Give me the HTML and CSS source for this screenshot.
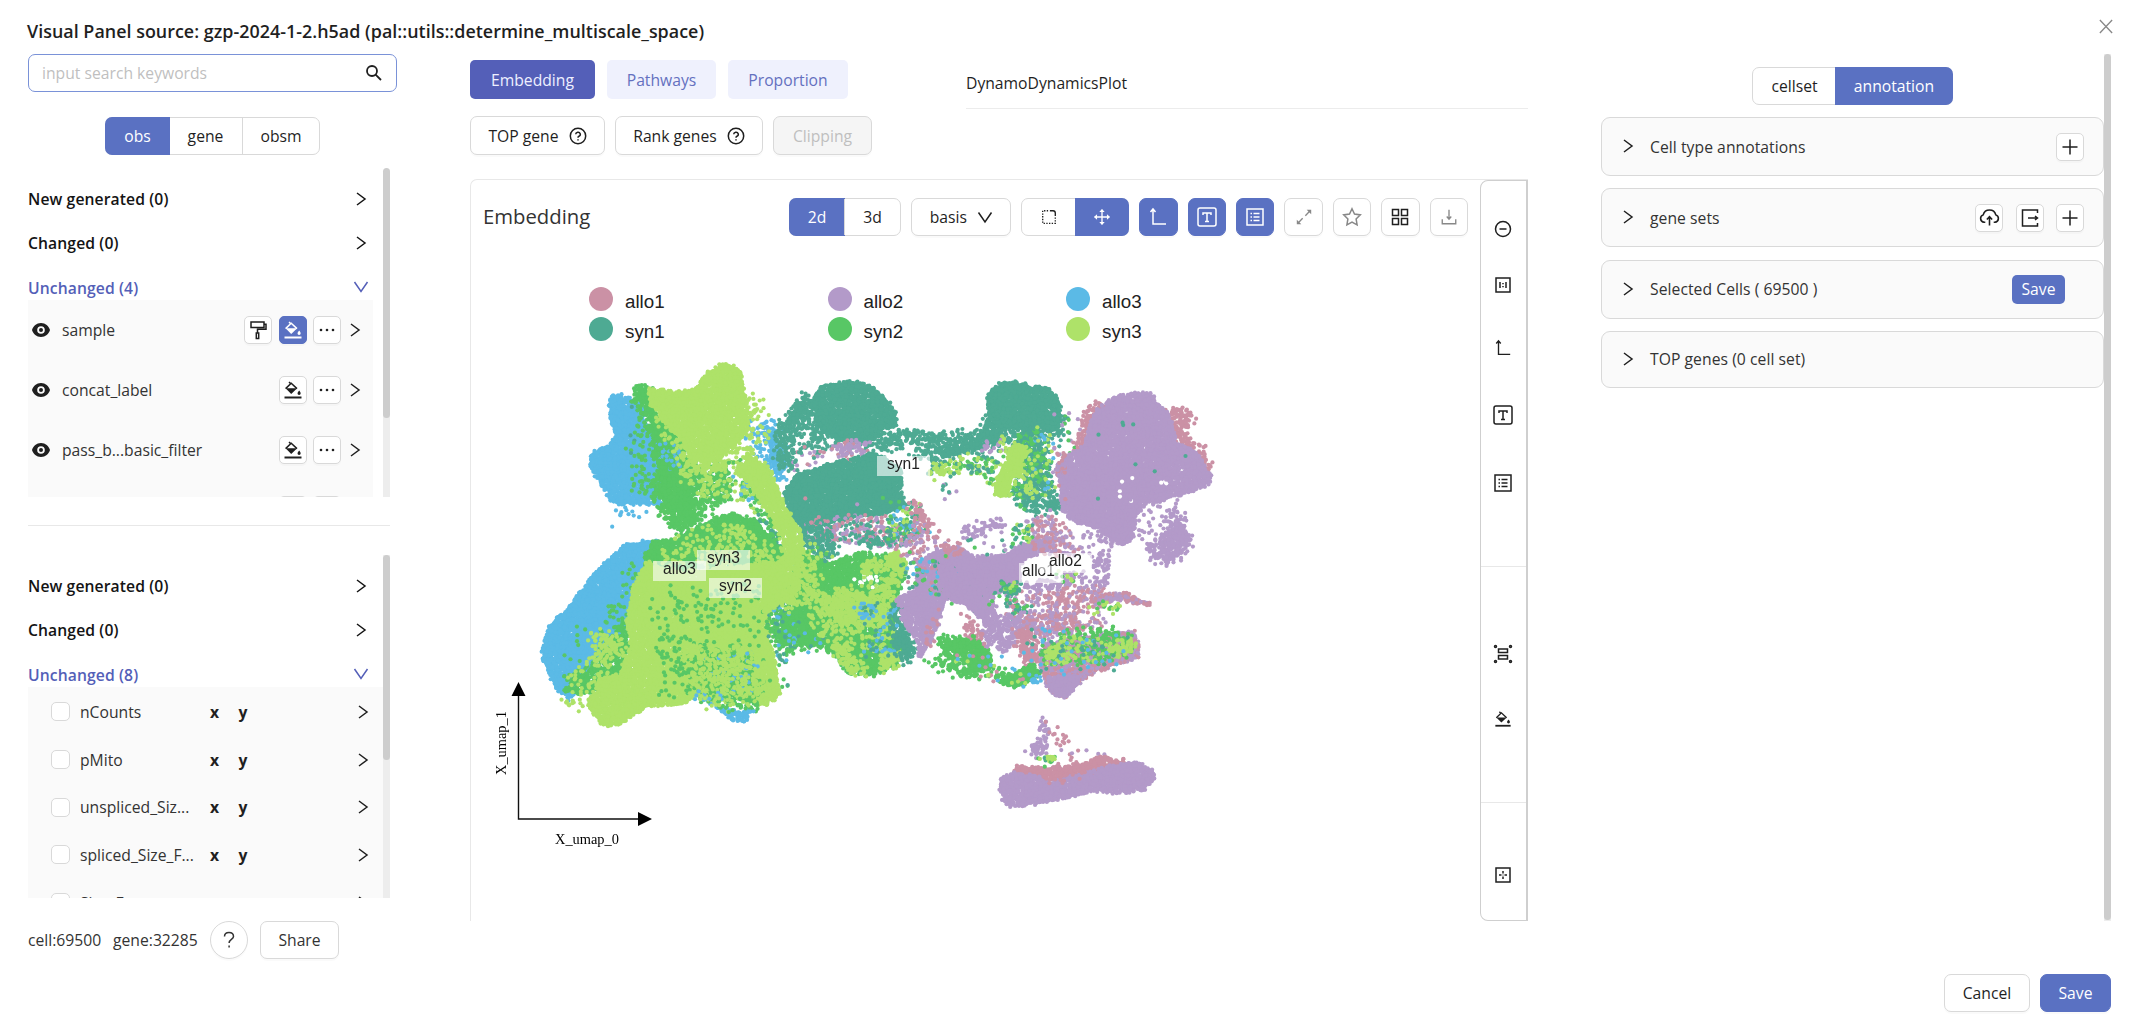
FILE: index.html
```html
<!DOCTYPE html>
<html lang="en">
<head>
<meta charset="utf-8">
<title>Visual Panel</title>
<link rel="stylesheet" href="styles.css">
</head>
<body>
<svg class="sprite" aria-hidden="true">
  <symbol id="chev" viewBox="0 0 12 16"><path d="M2 2l8 6-8 6"/></symbol>
  <symbol id="down" viewBox="0 0 16 12"><path d="M1.500 1l6.500 9.500L14.500 1"/></symbol>
  <symbol id="search" viewBox="0 0 18 18"><circle cx="7" cy="7" r="5"/><path d="M10.600 10.600l5.400 5.400"/></symbol>
  <symbol id="help" viewBox="0 0 18 18"><circle cx="9" cy="9" r="7.700"/><path d="M6.700 7.300a2.300 2.100 0 1 1 3.300 1.900c-.7.300-1 .8-1 1.500M9 12.200v1.300"/></symbol>
  <symbol id="qmark" viewBox="0 0 18 18"><path d="M4.500 5.500C4.500 3 6.500 1.500 9 1.500s4.500 1.500 4.500 4c0 3-4.400 3-4.400 6.500M9.100 14.500v2"/></symbol>
  <symbol id="eye" viewBox="0 0 20 16"><path class="solid" fill-rule="evenodd" d="M10 1C5.500 1 2.300 4 1 8c1.300 4 4.500 7 9 7s7.700-3 9-7c-1.300-4-4.500-7-9-7zm0 3.200a3.800 3.800 0 1 1 0 7.600 3.800 3.800 0 0 1 0-7.600z"/><circle class="solid" cx="10" cy="8" r="2"/></symbol>
  <symbol id="roller" viewBox="0 0 20 20"><path d="M3 2h13v5.500H3zM16 4.200h2v5H9.500V13M8.300 13h2.400v5.500H8.300z"/></symbol>
  <symbol id="bucket" viewBox="0 0 20 20"><path d="M6 2l1.800 1.800M2.600 8.600l5.600-5.400 5.800 5.400"/><path class="solid" d="M2.600 8.200h11.600l-6 5.800zM16.200 10.500c.8 1 1.500 2 1.500 2.800a1.600 1.600 0 0 1-3.200 0c0-.8.900-1.800 1.700-2.800z"/><path class="bar" d="M1.500 17.500h17"/></symbol>
  <symbol id="dots" viewBox="0 0 20 20"><circle class="solid" cx="4" cy="10" r="1.300"/><circle class="solid" cx="10" cy="10" r="1.300"/><circle class="solid" cx="16" cy="10" r="1.300"/></symbol>
  <symbol id="plus" viewBox="0 0 18 18"><path d="M9 1.500v15M1.500 9h15"/></symbol>
  <symbol id="cloud" viewBox="0 0 20 20"><path d="M6 14.500H4.800A3.600 3.600 0 0 1 4 7.500a6.200 6.200 0 0 1 12 0 3.600 3.600 0 0 1-.8 7H14M10 17.500V9.500M7.500 12l2.500-2.800 2.500 2.800"/></symbol>
  <symbol id="export" viewBox="0 0 20 20"><path d="M17.500 5V2h-15v16h15v-3M8 10h9M15 8l2.500 2-2.500 2"/></symbol>
  <symbol id="close" viewBox="0 0 16 16"><path d="M1 .5l14 15M15 .5l-14 15"/></symbol>
  <symbol id="lasso" viewBox="0 0 20 20"><path d="M11 3h3.500a2.500 2.500 0 0 1 2.500 2.500V9"/><path class="dash" d="M9 3H3v14h14v-8"/></symbol>
  <symbol id="move" viewBox="0 0 20 20"><path d="M10 2v16M2 10h16"/><path class="solid" d="M10 1l3 3.500H7zM10 19l3-3.500H7zM1 10l3.500-3v6zM19 10l-3.500-3v6z"/></symbol>
  <symbol id="axis" viewBox="0 0 20 20"><path d="M5 3v14h13M2.500 5L5 2l2.500 3"/></symbol>
  <symbol id="tbox" viewBox="0 0 20 20"><rect x="1" y="1" width="18" height="18" rx="2"/><path d="M6 8V6h8v2M10 6v8.500M8 14.500h4"/></symbol>
  <symbol id="list" viewBox="0 0 20 20"><rect x="2" y="2" width="16" height="16"/><path d="M8.500 6.500h6M8.500 10h6M8.500 13.500h6M5.500 6.500H7M5.500 10H7M5.500 13.500H7"/></symbol>
  <symbol id="expand" viewBox="0 0 20 20"><path d="M11.500 8.500L16 4M8.500 11.500L4 16"/><path class="solid" d="M18 2v5l-5-5zM2 18v-5l5 5z"/></symbol>
  <symbol id="star" viewBox="0 0 20 20"><path d="M10 1.800l2.500 5.300 5.800.8-4.200 4.100 1 5.800-5.100-2.700-5.100 2.700 1-5.800L1.700 7.900l5.800-.8z"/></symbol>
  <symbol id="grid" viewBox="0 0 20 20"><path d="M2.500 2.500h6v6h-6zM11.500 2.500h6v6h-6zM2.500 11.500h6v6h-6zM11.500 11.500h6v6h-6z"/></symbol>
  <symbol id="download" viewBox="0 0 20 20"><path d="M10 2v10M7.500 9.500L10 12.500l2.500-3M2.500 12.500v5h15v-5"/></symbol>
  <symbol id="minus" viewBox="0 0 18 18"><circle cx="9" cy="9" r="7.500"/><path d="M5.500 9h7"/></symbol>
  <symbol id="ratio" viewBox="0 0 18 18"><rect x="2" y="2" width="14" height="14"/><path d="M6 6v6M12 6v6M9 7v1.300M9 10v1.300"/></symbol>
  <symbol id="group" viewBox="0 0 20 20"><path d="M5.500 5h9v3.500h-9zM5.500 11.500h9V15h-9z"/><circle cx="2.500" cy="2.500" r="1"/><circle cx="17.500" cy="2.500" r="1"/><circle cx="2.500" cy="17.500" r="1"/><circle cx="17.500" cy="17.500" r="1"/></symbol>
  <symbol id="target" viewBox="0 0 18 18"><rect x="2" y="2" width="14" height="14"/><path d="M9 5v2.500M9 10.500V13M5 9h2.500M10.500 9H13M8.700 9h.6"/></symbol>
</svg>

<div class="app">
  <header class="titlebar">
    <h1>Visual Panel source: gzp-2024-1-2.h5ad (pal::utils::determine_multiscale_space)</h1>
    <svg class="ic close"><use href="#close"/></svg>
  </header>

  <div class="columns">
    <aside class="left">
      <div class="search"><span>input search keywords</span><svg class="ic i18"><use href="#search"/></svg></div>
      <div class="segment obs-seg"><span class="on">obs</span><span>gene</span><span>obsm</span></div>

      <div class="scroller first">
        <div class="scroll-body">
          <div class="head"><b>New generated (0)</b><svg class="ic chev"><use href="#chev"/></svg></div>
          <div class="head"><b>Changed (0)</b><svg class="ic chev"><use href="#chev"/></svg></div>
          <div class="head open"><b>Unchanged (4)</b><svg class="ic down"><use href="#down"/></svg></div>
          <div class="items obs-items">
            <div class="item"><svg class="ic eye"><use href="#eye"/></svg><span class="name">sample</span><i class="sq"><svg class="ic i20"><use href="#roller"/></svg></i><i class="sq on"><svg class="ic i20"><use href="#bucket"/></svg></i><i class="sq"><svg class="ic i20"><use href="#dots"/></svg></i><svg class="ic chev"><use href="#chev"/></svg></div>
            <div class="item"><svg class="ic eye"><use href="#eye"/></svg><span class="name">concat_label</span><i class="sq"><svg class="ic i20"><use href="#bucket"/></svg></i><i class="sq"><svg class="ic i20"><use href="#dots"/></svg></i><svg class="ic chev"><use href="#chev"/></svg></div>
            <div class="item"><svg class="ic eye"><use href="#eye"/></svg><span class="name">pass_b...basic_filter</span><i class="sq"><svg class="ic i20"><use href="#bucket"/></svg></i><i class="sq"><svg class="ic i20"><use href="#dots"/></svg></i><svg class="ic chev"><use href="#chev"/></svg></div>
            <div class="item"><span class="name"></span><i class="sq"></i><i class="sq"></i><svg class="ic chev"></svg></div>
          </div>
        </div>
        <div class="track"><div class="thumb"></div></div>
      </div>

      <div class="scroller second">
        <div class="scroll-body">
          <div class="head"><b>New generated (0)</b><svg class="ic chev"><use href="#chev"/></svg></div>
          <div class="head"><b>Changed (0)</b><svg class="ic chev"><use href="#chev"/></svg></div>
          <div class="head open"><b>Unchanged (8)</b><svg class="ic down"><use href="#down"/></svg></div>
          <div class="items num-items">
            <div class="item"><i class="check"></i><span class="name">nCounts</span><b>x</b><b>y</b><svg class="ic chev"><use href="#chev"/></svg></div>
            <div class="item"><i class="check"></i><span class="name">pMito</span><b>x</b><b>y</b><svg class="ic chev"><use href="#chev"/></svg></div>
            <div class="item"><i class="check"></i><span class="name">unspliced_Siz...</span><b>x</b><b>y</b><svg class="ic chev"><use href="#chev"/></svg></div>
            <div class="item"><i class="check"></i><span class="name">spliced_Size_F...</span><b>x</b><b>y</b><svg class="ic chev"><use href="#chev"/></svg></div>
            <div class="item"><i class="check"></i><span class="name">Size_Factor</span><b></b><b></b><svg class="ic chev"><use href="#chev"/></svg></div>
          </div>
        </div>
        <div class="track"><div class="thumb"></div></div>
      </div>

      <div class="stats"><span class="cells">cell:69500</span><span class="genes">gene:32285</span><span class="btn round"><svg class="ic i18"><use href="#qmark"/></svg></span><span class="btn share">Share</span></div>
    </aside>

    <main class="center">
      <div class="top-tabs">
        <div class="tabs"><span class="tab on">Embedding</span><span class="tab path">Pathways</span><span class="tab prop">Proportion</span></div>
        <div class="plugin">DynamoDynamicsPlot</div>
      </div>
      <div class="actions">
        <span class="btn topgene">TOP gene<svg class="ic i18"><use href="#help"/></svg></span>
        <span class="btn rank">Rank genes<svg class="ic i18"><use href="#help"/></svg></span>
        <span class="btn clip">Clipping</span>
      </div>
      <section class="panel">
        <div class="view">
          <div class="toolbar">
            <h2>Embedding</h2>
            <div class="segment dims"><span class="on">2d</span><span>3d</span></div>
            <span class="btn basis">basis<svg class="ic down"><use href="#down"/></svg></span>
            <div class="segment mode"><span><svg class="ic i18"><use href="#lasso"/></svg></span><span class="on"><svg class="ic i18"><use href="#move"/></svg></span></div>
            <span class="btn tool on"><svg class="ic i20"><use href="#axis"/></svg></span>
            <span class="btn tool on"><svg class="ic i20"><use href="#tbox"/></svg></span>
            <span class="btn tool on"><svg class="ic i20"><use href="#list"/></svg></span>
            <span class="btn tool dim"><svg class="ic i18"><use href="#expand"/></svg></span>
            <span class="btn tool dim"><svg class="ic i20"><use href="#star"/></svg></span>
            <span class="btn tool"><svg class="ic i20"><use href="#grid"/></svg></span>
            <span class="btn tool dim"><svg class="ic i18"><use href="#download"/></svg></span>
          </div>
          <div class="legend">
            <span><i class="c-allo1"></i>allo1</span><span><i class="c-allo2"></i>allo2</span><span><i class="c-allo3"></i>allo3</span>
            <span><i class="c-syn1"></i>syn1</span><span><i class="c-syn2"></i>syn2</span><span><i class="c-syn3"></i>syn3</span>
          </div>
          <div class="plot">
            <canvas id="cells" width="1000" height="575"></canvas>
            <svg class="axes" width="240" height="240"><path d="M47.500 26v123h122" /><path class="head" d="M47.500 12l7 14h-14zM181 149l-14-7v14z"/><text x="84" y="174">X_umap_0</text><text transform="translate(35 105) rotate(-90)">X_umap_1</text></svg>
            <span class="tag t-syn1">syn1</span>
            <span class="tag t-allo3">allo3</span>
            <span class="tag t-syn3">syn3</span>
            <span class="tag t-syn2">syn2</span>
            <span class="tag t-allo1">allo1</span>
            <span class="tag t-allo2">allo2</span>
          </div>
        </div>
        <nav class="side">
          <div class="g1"><svg class="ic i18"><use href="#minus"/></svg><svg class="ic i18"><use href="#ratio"/></svg><svg class="ic i18"><use href="#axis"/></svg><svg class="ic i20"><use href="#tbox"/></svg><svg class="ic i20"><use href="#list"/></svg></div>
          <div class="g2"><svg class="ic i20"><use href="#group"/></svg><svg class="ic i18"><use href="#bucket"/></svg></div>
          <div class="g3"><svg class="ic i18"><use href="#target"/></svg></div>
        </nav>
      </section>
    </main>

    <aside class="right">
      <div class="right-body">
        <div class="segment anno-seg"><span>cellset</span><span class="on">annotation</span></div>
        <div class="card"><svg class="ic chev"><use href="#chev"/></svg><span class="name">Cell type annotations</span><i class="sq"><svg class="ic i18"><use href="#plus"/></svg></i></div>
        <div class="card"><svg class="ic chev"><use href="#chev"/></svg><span class="name">gene sets</span><i class="sq"><svg class="ic i22"><use href="#cloud"/></svg></i><i class="sq"><svg class="ic i20"><use href="#export"/></svg></i><i class="sq"><svg class="ic i18"><use href="#plus"/></svg></i></div>
        <div class="card"><svg class="ic chev"><use href="#chev"/></svg><span class="name">Selected Cells ( 69500 )</span><span class="mini">Save</span></div>
        <div class="card"><svg class="ic chev"><use href="#chev"/></svg><span class="name">TOP genes (0 cell set)</span></div>
      </div>
      <div class="track"><div class="thumb"></div></div>
    </aside>
  </div>

  <footer><span class="btn cancel">Cancel</span><span class="btn save">Save</span></footer>
</div>
<script src="plot.js"></script>
</body>
</html>
```
FILE: styles.css
```css
* { box-sizing: border-box; }
body { margin: 0; background: #fff; color: #1f1f1f; font: 15.7px/24px "Open Sans", "Noto Sans", sans-serif; overflow: hidden; }
h1, h2 { margin: 0; }
i { font-style: normal; }
b { font-weight: 600; }
.sprite { display: none; }

.ic { flex: none; fill: none; stroke: currentColor; stroke-width: 1.5; display: block; }
.i18 { width: 18px; height: 18px; }
.i20 { width: 20px; height: 20px; }
.i22 { width: 21px; height: 21px; }
.chev { width: 12px; height: 16px; }
.down { width: 16px; height: 12px; }
.eye { width: 20px; height: 16px; }
.solid { fill: currentColor; stroke: none; }
.bar { stroke-width: 2; }
.dash { stroke-dasharray: 1.5 1.5; }

.app { height: 1033px; display: flex; flex-direction: column; padding: 0 20px 21px 28px; }
.titlebar { height: 54px; flex: none; display: flex; justify-content: space-between; padding: 18px 0 0; }
h1 { font-size: 17.900px; font-weight: 600; line-height: 26px; letter-spacing: .02px; margin-left: -1px; }
.close { width: 14px; height: 15px; color: #888; margin: 1px -2px 0 0; }
.columns { display: flex; height: 867px; flex: none; }

.left { width: 369px; display: flex; flex-direction: column; margin-right: 73px; height: 906px; flex: none; }
.search { height: 38px; flex: none; border: 1px solid #7a92d8; border-radius: 7px; padding: 0 13px; display: flex; align-items: center; justify-content: space-between; color: #bfbfbf; }
.search .ic { color: #1f1f1f; stroke-width: 1.800; }

.segment { display: flex; height: 38px; flex: none; border: 1px solid #d9d9d9; border-radius: 7px; }
.segment span { display: flex; align-items: center; justify-content: center; flex: 1; }
.segment span + span { border-left: 1px solid #d9d9d9; }
.segment .on { background: #5a71c2; color: #fff; border: 0 !important; margin: -1px; }
.segment .on:first-child { border-radius: 7px 0 0 7px; }
.segment .on:last-child { border-radius: 0 7px 7px 0; }
.obs-seg { width: 215px; margin: 25px 0 13px 77px; }
.obs-seg span:nth-child(1) { flex: 0 0 65px; }
.obs-seg span:nth-child(2) { flex: 0 0 73px; border-left: 0; }

.scroller { display: flex; width: 362px; flex: none; overflow: hidden; position: relative; }
.scroll-body { width: 355px; display: flex; flex-direction: column; }
.track { width: 7px; background: #ededed; }
.thumb { background: #cdcdcd; border-radius: 4px; }
.first { height: 329px; }
.first .track { background: linear-gradient(#fff 0 4px, #ededed 4px); }
.first .thumb { height: 250px; }
.second { height: 343px; margin-top: 58px; overflow: visible; }
.second .scroll-body { overflow: hidden; }
.second::before { content: ""; position: absolute; top: -30px; left: 0; width: 362px; height: 1px; background: #e8e8e8; }
.second .thumb { height: 205px; }
.head { height: 44px; display: flex; align-items: center; justify-content: space-between; padding-right: 16px; flex: none; color: #141414; }
.head b { letter-spacing: .1px; }
.first .head:first-child { margin-top: 9px; }
.second .head:first-child { margin-top: 9px; }
.head.open { color: #545fb8; height: 35px; padding: 11px 14px 0 0; align-items: flex-start; }
.head.open .ic { margin-top: 5px; }
.items { background: #fafafa; flex: none; }
.item { display: flex; align-items: center; color: #333; }
.item .ic { color: #1f1f1f; }
.obs-items { width: 345px; }
.obs-items .item { height: 60px; padding: 0 12px 0 3px; }
.obs-items .eye { margin-right: 11px; }
.obs-items .chev { margin-left: 8px; }
.name { flex: 1; white-space: nowrap; }
.sq { width: 28px; height: 28px; flex: none; border: 1px solid #d9d9d9; border-radius: 5px; background: #fff; display: flex; align-items: center; justify-content: center; margin-left: 6.500px; box-shadow: 0 2px 0 rgba(0,0,0,.02); }
.item .sq.on, .item .sq.on .ic { background: #5a71c2; border-color: #5a71c2; color: #fff; }
.num-items .item { height: 47.700px; padding: 2px 14px 0 23px; }
.check { width: 19px; height: 19px; background: #fff; border: 1px solid #d9d9d9; border-radius: 5px; margin-right: 10px; flex: none; }
.num-items .name { flex: 0 0 130px; }
.num-items b { width: 28.500px; color: #1f1f1f; font-weight: 700; }
.num-items .chev { margin-left: auto; }

.stats { display: flex; align-items: center; margin-top: 23px; color: #333; }
.cells { width: 85px; }
.genes { width: 97px; }
.btn { height: 38px; flex: none; display: flex; align-items: center; justify-content: center; border: 1px solid #d9d9d9; border-radius: 7px; background: #fff; box-shadow: 0 2px 0 rgba(0,0,0,.02); }
.round { width: 38px; border-radius: 50%; margin-right: 12px; }
.share { width: 79px; }

.center { width: 1058px; flex: none; display: flex; flex-direction: column; margin-right: 73px; }
.top-tabs { display: flex; justify-content: space-between; height: 55px; flex: none; }
.tabs { display: flex; gap: 12px; padding-top: 6px; }
.tab { height: 39px; width: 125px; display: flex; align-items: center; justify-content: center; border-radius: 5px; background: #eff1fd; color: #6470bf; }
.tab.on { background: #545fb8; color: #eef0ff; }
.path { width: 109px; }
.prop { width: 120px; }
.plugin { width: 562px; border-bottom: 1px solid #ececec; padding-top: 17px; }
.actions { display: flex; gap: 10px; padding-top: 7px; height: 70px; flex: none; }
.actions .btn { gap: 10px; height: 39px; }
.topgene { width: 135px; }
.rank { width: 148px; }
.clip { width: 99px; background: #f5f5f5; color: #bfbfbf; }
.panel { display: flex; height: 742px; flex: none; border: 1px solid #e8e8e8; border-width: 1px 0 0 1px; border-radius: 7px 0 0 0; }
.view { flex: 1; }
.toolbar { display: flex; gap: 10px; padding: 18px 12px 0 12px; align-items: center; }
h2 { font-size: 20.300px; font-weight: 400; margin: -2px auto 0 0; color: #333; }
.dims { width: 112px; }
.basis { width: 100px; gap: 10px; }
.basis .down { height: 13px; }
.mode { width: 108px; }
.tool { width: 38.400px; border-color: #d9d9d9; }
.tool.on { background: #5a71c2; border-color: #5a71c2; color: #fff; }
.dim { color: #888; }
.legend { display: grid; grid-template-columns: repeat(3, 238.500px); grid-auto-rows: 30px; margin: 49px 0 0 118px; font: 18.800px "Liberation Sans", Arial, sans-serif; color: #222; width: 800px; }
.legend span { display: flex; align-items: center; padding-top: 4px; }
.legend i { width: 24px; height: 24px; border-radius: 50%; margin: -6px 12px 0 0; }
.c-allo1 { background: #cb91a5; } .c-allo2 { background: #b39ac9; } .c-allo3 { background: #5bbae6; }
.c-syn1 { background: #4eaa93; } .c-syn2 { background: #58c765; } .c-syn3 { background: #aee269; }
.plot { position: relative; height: 575px; }
#cells { position: absolute; left: 0; top: 0; }
.axes { position: absolute; left: 0; top: 325px; fill: none; stroke: #111; stroke-width: 1.400; }
.axes .head, .axes text { fill: #000; stroke: none; }
.axes text { font: 14.400px "Liberation Serif", "Times New Roman", serif; }
.tag { position: absolute; width: 53px; height: 20px; background: rgba(255,255,255,.6); text-align: center; font: 15.600px/16px "Liberation Sans", Arial, sans-serif; color: #222; }
.t-syn1 { left: 406px; top: 111px; }
.t-allo3 { left: 182px; top: 216px; }
.t-syn3 { left: 226px; top: 205px; }
.t-syn2 { left: 238px; top: 233px; }
.t-allo1 { left: 548px; top: 218px; width: 44px; padding-left: 3px; text-align: left; }
.t-allo2 { left: 568px; top: 208px; }
.side { width: 48px; border: 1px solid #cfcfcf; border-radius: 8px 0 0 8px; border-right-width: 2px; display: flex; flex-direction: column; }
.side div { display: flex; flex-direction: column; align-items: center; padding-right: 1px; }
.side div + div { border-top: 1px solid #e8e8e8; }
.g1 { height: 385px; padding-top: 39px; }
.g1 .ic:nth-child(2) { margin-top: 38px; }
.g1 .ic:nth-child(3) { margin-top: 45px; }
.g1 .ic:nth-child(4) { margin-top: 48px; }
.g1 .ic:nth-child(5) { margin-top: 48px; }
.g2 { height: 236px; padding-top: 77px; }
.g2 .ic + .ic { margin-top: 46px; }
.g3 { padding-top: 63px; }

.right { display: flex; width: 510px; flex: none; }
.right-body { width: 503px; padding-top: 13px; }
.anno-seg { width: 201px; margin: 0 0 12px 151px; }
.anno-seg span:first-child { flex: 0 0 83px; }
.card { height: 59px; border: 1px solid #d9d9d9; border-radius: 9px; background: #fafafa; display: flex; align-items: center; margin-bottom: 12.300px; padding: 0 19px 0 20px; color: #333; letter-spacing: .05px; }
.card:last-child { height: 57px; }
.card .chev { color: #1f1f1f; margin: -1px 16px 0 0; }
.card .sq { margin-left: 12.500px; color: #1f1f1f; }
.mini { width: 53px; height: 29px; border-radius: 5px; background: #5a71c2; color: #fff; text-align: center; line-height: 29px; margin-right: 19px; }
.right .track { height: 867px; }
.right .thumb { height: 866px; }

footer { margin-top: auto; display: flex; justify-content: flex-end; gap: 10px; }
.cancel { width: 86px; }
.save { width: 71px; background: #5a71c2; border-color: #5a71c2; color: #fff; }
```
FILE: plot.js
```js
// Scatter of cells: each cluster is [colours, points per px², outline].
// Outlines are in thirds of a pixel; every block has its own origin.
const COLORS = { B: '#5bbae6', G: '#58c765', L: '#aee269', T: '#4eaa93', P: '#b39ac9', K: '#cb91a5', W: '#fff' };
const canvas = document.getElementById('cells');
const ctx = canvas.getContext('2d');

let seed = 20241;
function rand() {
  seed = (seed + 0x6d2b79f5) | 0;
  let t = Math.imul(seed ^ (seed >>> 15), 1 | seed);
  t = (t + Math.imul(t ^ (t >>> 7), 61 | t)) ^ t;
  return ((t ^ (t >>> 14)) >>> 0) / 4294967296;
}

function inside(p, x, y) {
  let hit = false;
  for (let i = 0, j = p.length - 1; i < p.length; j = i++) {
    const [xi, yi] = p[i], [xj, yj] = p[j];
    if ((yi > y) !== (yj > y) && x < (xj - xi) * (y - yi) / (yj - yi) + xi) hit = !hit;
  }
  return hit;
}

function cluster(ox, oy, colors, density, outline) {
  const p = outline.split(' ').map(s => s.split(',').map(Number)).map(([x, y]) => [ox + x / 3, oy + y / 3]);
  const xs = p.map(q => q[0]), ys = p.map(q => q[1]);
  const x0 = Math.min(...xs), x1 = Math.max(...xs), y0 = Math.min(...ys), y1 = Math.max(...ys);
  const n = (x1 - x0) * (y1 - y0) * density;
  // Thin clusters have soft edges, dense ones only a slight roughness.
  const spread = density > .3 ? 2 : 7;
  for (let i = 0; i < n; i++) {
    let x = x0 + rand() * (x1 - x0), y = y0 + rand() * (y1 - y0);
    if (!inside(p, x, y)) continue;
    x += (rand() + rand() - 1) * spread;
    y += (rand() + rand() - 1) * spread;
    ctx.fillStyle = COLORS[colors[Math.floor(rand() * colors.length)]];
    ctx.beginPath();
    ctx.arc(x, y, 2.1, 0, 7);
    ctx.fill();
  }
}

const west = [
  ['B', .45, '450,168 490,165 540,190 560,260 600,330 600,495 530,490 460,492 430,440 390,385 392,340 440,322 468,290 447,220'],
  ['B', .03, '460,490 560,495 550,530 465,552'],
  ['G', .012, '460,320 560,330 560,450 500,450'],
  ['T', .002, '460,190 560,190 560,400 460,400'],
  ['B', .06, '860,240 945,230 975,330 970,460 940,430 880,340 850,300'],
  ['B', .12, '905,260 945,260 965,350 970,420 930,410'],
  ['G', .25, '537,135 575,160 590,220 650,270 670,340 700,370 700,480 690,550 665,580 610,530 605,490 575,480 590,400 580,320 560,240 510,170'],
  ['G', .32, '537,138 565,160 590,240 650,290 660,340 690,370 690,480 680,530 620,500 600,420 600,320'],
  ['G', .17, '690,360 800,380 815,470 760,500 730,480 720,540 660,560'],
  ['GB', .1, '600,310 670,330 660,400 590,370'],
  ['G', .03, '510,200 560,230 580,470 510,450 540,330'],
  ['L', .5, '562,145 600,150 650,157 705,150 745,97 785,72 820,78 843,100 852,160 862,200 858,285 800,330 790,350 690,360 665,300 610,240 570,190'],
  ['L', .2, '690,350 800,350 800,380 740,400 700,380'],
  ['L', .05, '860,140 915,180 920,330 860,300'],
  ['L', .06, '570,200 640,230 690,340 820,360 810,470 720,480 660,400 610,290'],
  ['LG', .06, '800,340 870,380 900,480 960,560 840,480'],
  ['LGB', .04, '810,400 870,400 900,540 850,490'],
  ['GT', .05, '880,490 950,520 970,620 880,560'],
  ['G', .06, '700,480 800,480 730,540 670,575'],
  ['TG', .14, '920,540 960,550 965,630 930,600'],
  ['B', .5, '500,614 560,605 600,607 565,680 520,770 510,860 430,930 380,990 330,1080 290,1045 250,960 248,920 268,860 330,795 405,700 460,645'],
  ['G', .5, '580,604 650,597 700,577 760,537 820,520 880,540 940,600 980,660 900,710 560,700 555,650'],
  ['G', .03, '500,680 540,690 500,860 410,900'],
  ['G', .005, '300,900 440,780 400,950 300,1000'],
  ['G', .25, '490,850 520,880 500,1000 380,1070 315,1050 320,1015 380,990 430,920'],
  ['L', .12, '400,880 460,880 480,920 410,970 385,940'],
  ['L', .04, '470,900 510,900 510,1020 320,1060 320,1020'],
  ['L', .5, '560,665 640,700 740,690 960,665 1010,740 930,820 925,900 945,960 960,1060 915,1100 860,1085 800,1060 700,1075 660,1092 560,1098 480,1153 430,1156 395,1115 384,1080 420,1020 480,1005 515,920 500,850 520,740'],
  ['L', .05, '310,1080 400,1085 400,1110 330,1105'],
  ['L', .05, '600,620 960,620 960,700 580,690'],
  ['L', .12, '790,550 840,560 860,590 790,590'],
  ['L', .03, '640,590 760,560 930,600 930,640 640,640'],
  ['G', .018, '560,750 920,720 900,900 940,1080 600,1060'],
  ['G', .09, '640,970 740,930 860,950 880,1060 900,1110 720,1080'],
  ['GB', .04, '740,940 880,940 880,1060 760,1040'],
  ['L', .09, '660,920 900,930 920,1080 700,1060'],
  ['B', .4, '765,1098 830,1112 890,1110 850,1148 810,1138'],
  ['BGL', .12, '690,1060 780,1060 880,1100 820,1110 730,1092'],
  ['GT', .05, '920,820 990,780 980,1040 960,1060 960,960'],
];
const north = [
  ['T', .45, '65,108 110,97 165,95 215,112 250,142 286,185 290,225 240,240 200,280 120,270 60,240 45,200 42,140'],
  ['T', .25, '-20,170 20,137 50,142 60,250 30,200 0,210 -25,250 -20,340 -30,370 -66,335 -70,240 -35,200'],
  ['T', .1, '-20,200 60,200 260,240 310,240 300,300 200,290 -10,300'],
  ['T', .13, '290,237 420,252 560,240 570,200 620,250 540,290 400,335 350,300 400,275 320,265'],
  ['T', .3, '560,235 620,250 540,290 420,325 440,295 520,270'],
  ['T', .05, '240,230 540,260 420,330 240,300'],
  ['PK', .04, '60,290 120,275 210,280 230,305 130,335 50,310'],
  ['P', .15, '105,285 170,275 200,300 130,325'],
  ['PKT', .03, '-40,300 60,290 60,330 -30,400'],
  ['T', .5, '-50,430 -10,375 80,344 170,324 215,308 255,325 303,360 306,440 318,470 250,490 60,520 10,540 -30,500'],
  ['TPK', .002, '0,420 200,420 200,500 0,500'],
  ['G', .01, '240,440 300,440 300,500 240,480'],
  ['T', .45, '600,99 650,97 700,110 750,114 780,152 783,210 760,240 600,235 570,210 559,140'],
  ['T', .13, '560,200 780,210 800,270 760,260 640,280 520,300'],
  ['T', .18, '680,270 740,290 750,400 780,475 680,485 640,430 690,380'],
  ['TG', .12, '640,230 740,250 740,400 650,480 640,430'],
  ['TBPGL', .035, '700,220 750,240 770,450 730,450'],
  ['TPG', .02, '780,170 850,180 850,330 760,320'],
  ['GTL', .12, '440,335 620,320 580,395 500,360 420,375 370,370'],
  ['L', .15, '370,370 440,345 450,370 400,380'],
  ['P', .08, '530,290 620,275 620,300 560,310'],
  ['L', .5, '640,285 680,292 660,372 635,380 620,437 584,432 594,385 616,340'],
  ['L', .05, '600,250 700,300 700,440 620,430'],
  ['K', .28, '870,175 905,155 915,170 880,250 860,290 820,310 840,270'],
  ['K', .2, '1105,178 1165,178 1178,215 1150,250 1195,285 1225,340 1228,380 1195,350 1140,290 1115,240'],
  ['P', .5, '890,180 940,142 1000,128 1055,130 1078,165 1110,200 1130,280 1190,305 1213,345 1235,382 1220,410 1150,432 1080,453 1040,458 1013,490 1000,560 965,588 890,533 820,513 785,480 780,400 770,350 800,320 850,290 870,225'],
  ['W', .01, '910,390 1110,390 1090,430 950,450'],
  ['P', .02, '900,380 1120,380 1100,440 940,460'],
  ['PK', .07, '765,310 800,310 800,440 770,410'],
  ['T', .0008, '850,200 1180,210 1180,420 860,500'],
  ['P', .04, '1010,470 1090,450 1080,500 1020,560'],
  ['P', .05, '850,540 1000,560 960,600 860,590'],
  ['P', .12, '1095,480 1140,460 1150,500 1175,580 1125,630 1108,685 1090,640 1035,610 1070,560 1100,550'],
  ['P', .25, '1100,510 1145,510 1165,580 1120,630 1070,610 1085,570'],
  ['P', .03, '1020,480 1040,600 1100,670 1010,600'],
];
const middle = [
  ['TPK', .13, '220,250 320,235 500,235 560,280 560,310 500,320 340,300 230,300'],
  ['T', .2, '220,250 280,260 320,330 280,360 220,310'],
  ['T', .1, '370,290 490,280 490,320 400,310'],
  ['G', .38, '215,330 300,370 400,335 480,345 520,360 525,400 500,470 490,560 520,600 500,680 430,705 350,700 315,645 260,615 150,610 150,580 200,480 170,440'],
  ['G', .13, '110,550 200,470 260,500 250,620 150,625'],
  ['GTB', .04, '110,540 160,500 300,620 150,660'],
  ['L', .35, '60,40 120,90 160,190 215,280 215,350 190,480 100,520 100,420 170,340 130,240 60,140 20,80'],
  ['L', .1, '0,20 60,20 120,100 80,160 20,100'],
  ['L', .1, '180,300 240,330 280,400 260,490 170,510'],
  ['TGL', .08, '230,310 310,320 300,360 240,350'],
  ['W', .2, '380,412 440,408 435,430 390,425'],
  ['L', .35, '465,345 500,335 540,385 515,400 480,375'],
  ['L', .25, '400,375 480,360 490,380 400,400'],
  ['L', .25, '400,440 460,420 510,395 500,430 440,450'],
  ['L', .22, '270,480 340,450 460,480 480,540 420,560 360,550 300,540'],
  ['L', .06, '230,450 500,450 480,620 320,640 240,560'],
  ['L', .28, '305,600 350,630 420,700 350,695'],
  ['L', .28, '450,640 500,620 500,680 450,685'],
  ['BT', .09, '385,490 440,490 440,540 390,540'],
  ['T', .25, '490,500 520,500 530,580 560,610 550,658 510,655 490,590'],
  ['TB', .05, '440,580 490,470 500,650 400,650'],
  ['GTBL', .12, '470,240 560,190 590,270 520,300 480,280'],
  ['K', .14, '530,190 580,200 610,270 560,260'],
  ['PK', .06, '580,230 620,270 660,310 540,380 500,320'],
  ['P', .4, '560,370 620,330 690,320 730,350 850,345 890,310 850,450 790,460 800,540 740,520 690,480 650,475 610,590 570,655 560,600 520,550 500,480 560,440'],
  ['K', .04, '570,600 640,490 650,500 600,620'],
  ['K', .12, '640,310 690,310 690,350 640,350'],
  ['GTBK', .03, '510,350 690,350 740,480 540,450'],
  ['TG', .012, '600,450 900,400 900,540 740,520'],
  ['PT', .025, '620,120 690,100 680,170 640,190'],
  ['G', .3, '630,600 740,610 780,640 780,680 740,670 660,640'],
  ['G', .14, '580,670 650,660 780,690 780,710 690,700'],
];
const south = [
  ['P', .14, '60,300 180,270 185,295 90,340'],
  ['GTP', .025, '60,310 220,340 360,350 120,370'],
  ['P', .4, '0,385 180,385 250,340 310,330 330,360 240,390 240,460 150,490 120,530 160,600 100,540 0,490'],
  ['PK', .12, '270,270 340,250 400,350 440,380 280,370'],
  ['GLT', .13, '220,290 270,280 290,330 230,330'],
  ['P', .25, '465,375 500,370 510,410 460,420'],
  ['P', .18, '250,470 420,430 430,455 300,485'],
  ['K', .07, '380,470 500,480 490,520 380,540 240,500'],
  ['PK', .05, '200,490 480,460 500,600 280,620 200,560'],
  ['P', .15, '450,460 500,440 510,460 470,475'],
  ['PK', .35, '460,500 550,487 632,520 622,528 550,515 480,520'],
  ['T', .3, '168,470 240,468 240,482 180,485'],
  ['LG', .1, '170,465 240,465 240,480 180,480'],
  ['LG', .15, '360,435 410,435 410,450 370,450'],
  ['TG', .08, '200,510 270,530 270,560 210,560'],
  ['GL', .16, '460,530 540,515 530,535 470,545'],
  ['P', .22, '140,570 240,560 290,580 200,660 120,640'],
  ['K', .2, '70,550 110,590 130,650 90,650'],
  ['K', .3, '225,590 270,590 300,690 270,710 240,660'],
  ['PK', .15, '250,560 400,540 440,600 300,630'],
  ['PK', .33, '310,640 440,620 580,603 600,650 590,685 510,710 440,740 400,775 380,800 345,795 320,770 300,700'],
  ['P', .45, '325,740 420,740 405,775 375,802 345,795 325,765'],
  ['G', .1, '320,640 430,590 520,600 590,640 560,680 430,700 310,700'],
  ['L', .25, '305,690 350,650 370,660 330,695'],
  ['L', .25, '510,660 580,630 585,650 520,680'],
  ['L', .05, '350,620 580,630 500,690 330,690'],
  ['G', .28, '0,630 110,630 150,690 140,710 100,700 30,680'],
  ['G', .1, '0,700 180,710 190,740 80,735'],
  ['G', .4, '165,735 220,730 280,700 300,730 260,760 220,772 180,760'],
  ['LBK', .025, '0,650 180,690 300,740 280,780 120,740'],
  ['TB', .012, '200,600 590,610 520,720 280,740'],
  ['B', .1, '270,740 300,720 310,760 270,755'],
];
const island = [
  ['P', .3, '728,1105 742,1120 742,1200 700,1215 690,1195 728,1185'],
  ['K', .05, '730,1105 770,1130 830,1180 820,1240 770,1170'],
  ['P', .01, '760,1120 840,1200 980,1190 800,1240'],
  ['K', .4, '650,1245 740,1257 830,1245 900,1222 985,1230 900,1300 640,1280'],
  ['P', .5, '600,1287 640,1268 700,1277 760,1295 860,1268 960,1242 1020,1238 1066,1267 1058,1290 1030,1322 970,1328 880,1325 780,1347 700,1360 640,1372 605,1348'],
  ['K', .06, '700,1250 860,1240 850,1290 760,1300'],
  ['GTL', .15, '710,1225 775,1225 765,1245 715,1240'],
  ['L', .4, '735,1218 765,1220 755,1232'],
];
west.forEach(c => cluster(-11, -5, ...c));
north.forEach(c => cluster(329, 5, ...c));
middle.forEach(c => cluster(259, 95, ...c));
south.forEach(c => cluster(469, 85, ...c));
island.forEach(c => cluster(329, 5, ...c));
```
